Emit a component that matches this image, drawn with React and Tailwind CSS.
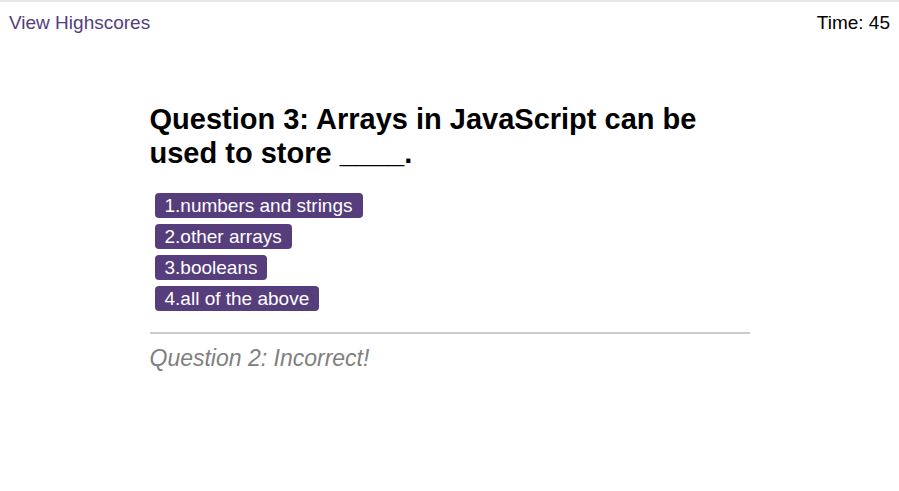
import React from 'react';

const choices = ['1.numbers and strings', '2.other arrays', '3.booleans', '4.all of the above'];

export default function App() {
  return (
    <div className="min-h-[491px] bg-white font-['Liberation_Sans',Arial,sans-serif]">
      <div className="border-t-2 border-[#e5e5e5]" />
      <header className="flex justify-between items-center px-[9px] pt-[9px] text-[19px] leading-[24px]">
        <a className="text-[#563d7c]">View Highscores</a>
        <span className="text-black">Time: 45</span>
      </header>
      <main className="w-[600px] mx-auto mt-[67px]">
        <h2 className="text-[29px] leading-[34px] font-bold text-black pr-[40px]">
          Question 3: Arrays in JavaScript can be used to store ____.
        </h2>
        <div className="mt-[23px] flex flex-col items-start gap-[6px]">
          {choices.map((c) => (
            <button
              key={c}
              className="ml-[5px] bg-[#563d7c] text-white text-[19px] leading-[21px] px-[10px] py-[2px] rounded-[4px]"
            >
              {c}
            </button>
          ))}
        </div>
        <hr className="mt-[21px] border-0 border-t-2 border-[#cccccc]" />
        <p className="mt-[10px] italic text-[23px] leading-[28px] text-[#808080]">Question 2: Incorrect!</p>
      </main>
    </div>
  );
}
